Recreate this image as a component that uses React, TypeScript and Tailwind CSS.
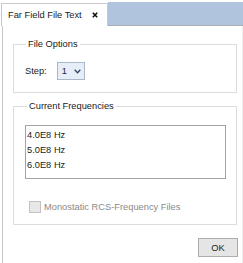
export default function App() {
  return (
    <div className="w-[243px] h-[263px] bg-white flex flex-col text-[9.3px] leading-[12px] text-[#1b1b1b] font-['Liberation_Sans',Arial,sans-serif] overflow-hidden">
      <div className="flex items-start h-[26px] shrink-0">
        <div className="ml-[1px] mt-[3px] h-[23px] w-[107px] bg-white border-l border-t border-r border-[#c9c9c9] flex items-center pl-[6px] pb-[1px]">
          <span>Far Field File Text</span>
          <svg className="ml-[10px]" width="6" height="6" viewBox="0 0 6 6">
            <path d="M0.8 0.8 L5.2 5.2 M5.2 0.8 L0.8 5.2" stroke="#111" strokeWidth="1.6" />
          </svg>
        </div>
        <div className="flex-1 mt-[2px] h-[24px] bg-[#b0c4de] border-b border-[#a8aeb8]" />
      </div>

      <div className="flex-1 ml-[2px] border-l border-r border-l-[#c8c8c8] border-r-[#eeeeee] flex flex-col">
        <fieldset className="mt-[12px] ml-[10px] w-[224px] border border-[#dcdcdc] pl-[11px] pt-[12px] pb-[12px]">
          <legend className="px-[2px] ml-[1px]">File Options</legend>
          <div className="flex items-center h-[18px]">
            <span>Step:</span>
            <div className="ml-[10px] w-[28px] h-[18px] border border-[#abb6c6] bg-[#e6eef9] flex items-center pl-[4px]">
              <span className="text-[#1a2440]">1</span>
              <svg className="ml-[7px]" width="7" height="5" viewBox="0 0 7 5">
                <path d="M0.7 0.8 L3.5 3.8 L6.3 0.8" fill="none" stroke="#36465a" strokeWidth="1.3" />
              </svg>
            </div>
          </div>
        </fieldset>

        <fieldset className="mt-[7px] ml-[10px] w-[224px] border border-[#dcdcdc] pl-[11px] pt-[13px] pb-[11px]">
          <legend className="px-[2px] ml-[2px]">Current Frequencies</legend>
          <div className="w-[201px] h-[54px] border border-[#a3a3a3] pl-[1px] pt-[2px] leading-[15px]">
            <div>4.0E8 Hz</div>
            <div>5.0E8 Hz</div>
            <div>6.0E8 Hz</div>
          </div>
          <div className="mt-[22px] ml-[4px] flex items-center">
            <div className="w-[12px] h-[12px] border border-[#c2c2c2] bg-[#e8e8e8]" />
            <span className="ml-[3px] text-[#8a8a8a]">Monostatic RCS-Frequency Files</span>
          </div>
        </fieldset>

        <div className="flex justify-end mt-[13px] mr-[4px]">
          <button className="w-[40px] h-[19px] border border-[#adadad] bg-[#e5e5e5] flex items-center justify-center">
            OK
          </button>
        </div>
      </div>
    </div>
  );
}
